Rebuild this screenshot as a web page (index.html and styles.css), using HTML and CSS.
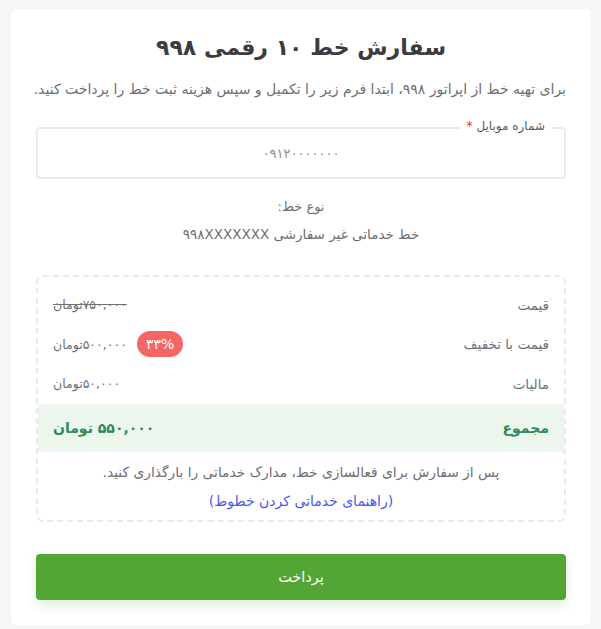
FILE: index.html
```html
<!DOCTYPE html>
<html lang="fa" dir="rtl">
<head>
<meta charset="utf-8">
<title>سفارش خط ۱۰ رقمی ۹۹۸</title>
<link rel="stylesheet" href="styles.css">
</head>
<body>
<div class="card">
  <h1 class="title">سفارش خط ۱۰ رقمی ۹۹۸</h1>
  <p class="subtitle">برای تهیه خط از اپراتور ۹۹۸، ابتدا فرم زیر را تکمیل و سپس هزینه ثبت خط را پرداخت کنید.</p>

  <div class="field">
    <span class="field-label">شماره موبایل <span class="req">*</span></span>
    <div class="field-input">۰۹۱۲۰۰۰۰۰۰۰</div>
  </div>

  <div class="line-type">
    <div class="lt-label">نوع خط:</div>
    <div class="lt-value">خط خدماتی غیر سفارشی ۹۹۸XXXXXXX</div>
  </div>

  <div class="summary">
    <div class="row">
      <span class="row-label">قیمت</span>
      <span class="row-value strike">۷۵۰,۰۰۰تومان</span>
    </div>
    <div class="row">
      <span class="row-label">قیمت با تخفیف</span>
      <span class="row-group">
        <span class="badge">۳۳%</span>
        <span class="row-value">۵۰۰,۰۰۰تومان</span>
      </span>
    </div>
    <div class="row">
      <span class="row-label">مالیات</span>
      <span class="row-value">۵۰,۰۰۰تومان</span>
    </div>
    <div class="row total">
      <span class="row-label">مجموع</span>
      <span class="row-value">۵۵۰,۰۰۰ تومان</span>
    </div>
    <p class="note">پس از سفارش برای فعالسازی خط، مدارک خدماتی را بارگذاری کنید.</p>
    <a class="guide" href="#">(راهنمای خدماتی کردن خطوط)</a>
  </div>

  <button class="pay">پرداخت</button>
</div>
</body>
</html>
```

FILE: styles.css
```css
* { box-sizing: border-box; }
html, body { margin: 0; padding: 0; }
body {
  background: #f6f7f9;
  font-family: "DejaVu Sans", "Noto Sans", sans-serif;
  color: #555;
  direction: rtl;
}
.card {
  margin: 9px 10px 0 11px;
  width: 580px;
  height: 616px;
  background: #fff;
  border-radius: 5px;
  box-shadow: 0 0 4px rgba(0,0,0,0.04);
  padding: 22px 25px 0;
}
.title {
  margin: 0;
  text-align: center;
  font-size: 22px;
  font-weight: bold;
  color: #3b3b40;
  line-height: 34px;
}
.subtitle {
  margin: 14px 0 0;
  font-size: 14px;
  color: #6e6e73;
  line-height: 20px;
  text-align: right;
  white-space: nowrap;
}
.field {
  position: relative;
  margin-top: 28px;
}
.field-input {
  height: 52px;
  border: 2px solid #e8ecf2;
  border-radius: 4px;
  display: flex;
  align-items: center;
  justify-content: center;
  font-size: 13px;
  color: #8a8a8f;
  letter-spacing: 0.5px;
}
.field-label {
  position: absolute;
  top: -10px;
  right: 14px;
  background: #fff;
  padding: 0 7px;
  font-size: 12px;
  color: #5a5a60;
  line-height: 18px;
}
.req { color: #ee2b2b; }
.line-type {
  margin-top: 18px;
  text-align: center;
  font-size: 13px;
  color: #6e6e73;
  line-height: 20px;
}
.lt-value { margin-top: 7px; font-size: 13.5px; }
.summary {
  margin-top: 31px;
  border: 2px dashed #e9eaef;
  border-radius: 7px;
  padding: 8px 0 9px;
}
.row {
  display: flex;
  justify-content: space-between;
  align-items: center;
  height: 39.5px;
  padding: 0 15px;
  font-size: 12.5px;
  color: #707075;
}
.row-label { font-size: 13.5px; }
.row-group {
  display: flex;
  align-items: center;
  gap: 10px;
}
.strike { text-decoration: line-through; }
.badge {
  background: #f66565;
  color: #fff;
  border-radius: 13px;
  padding: 0 9px;
  height: 26px;
  line-height: 26px;
  font-size: 14px;
}
.row.total {
  height: 48px;
  background: #ecf6ec;
  color: #2e8a5a;
  font-weight: bold;
  font-size: 14px;
}
.row.total .row-label { font-size: 14px; }
.note {
  margin: 10px 0 0;
  text-align: center;
  font-size: 13.8px;
  color: #6e6e73;
  line-height: 20px;
}
.guide {
  display: block;
  margin-top: 9px;
  text-align: center;
  font-size: 14px;
  color: #4a57f0;
  text-decoration: none;
  line-height: 20px;
}
.pay {
  display: block;
  width: 100%;
  margin-top: 32px;
  height: 46px;
  border: none;
  border-radius: 4px;
  background: #53a536;
  color: #fff;
  font-family: inherit;
  font-size: 14.5px;
  box-shadow: 0 5px 12px rgba(83,165,54,0.2);
}
```
